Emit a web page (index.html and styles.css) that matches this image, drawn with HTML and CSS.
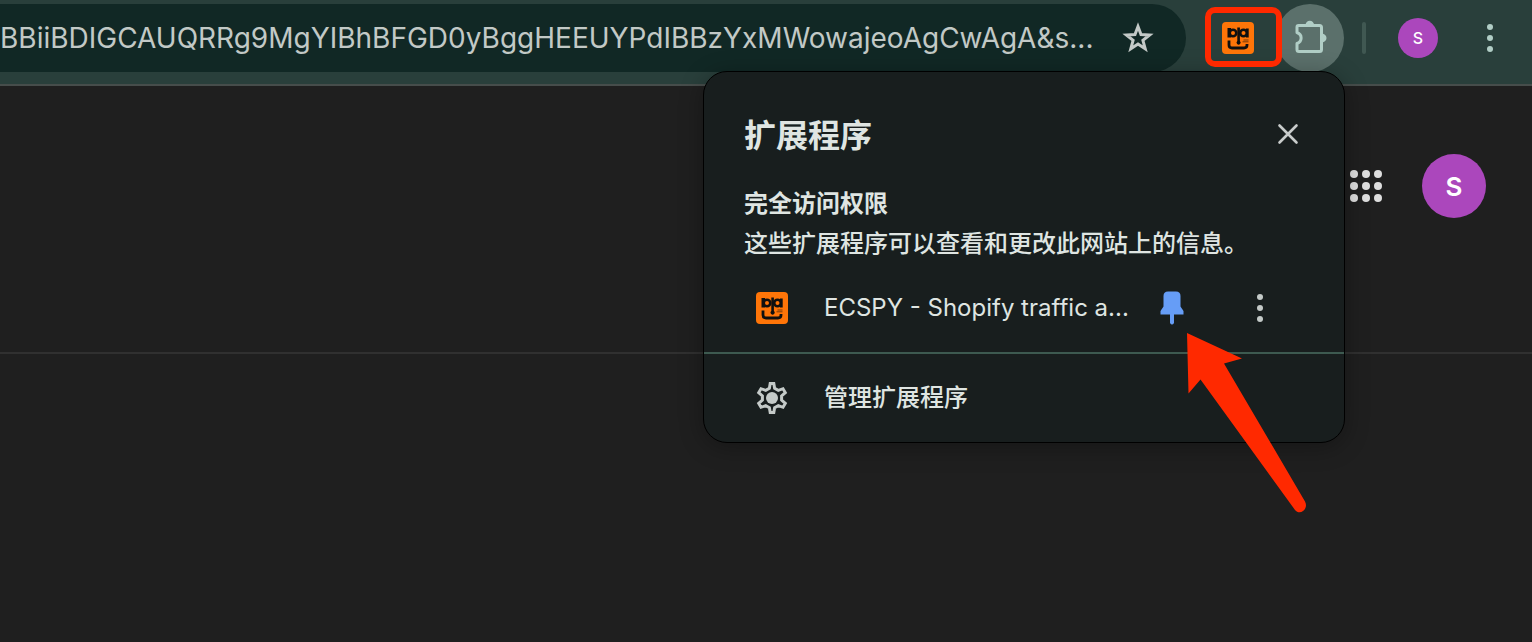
FILE: index.html
```html
<!DOCTYPE html>
<html lang="zh-CN">
<head>
<meta charset="utf-8">
<title>扩展程序</title>
<link rel="stylesheet" href="styles.css">
</head>
<body>
<svg class="defs" aria-hidden="true">
  <symbol id="logo" viewBox="0 0 32 32">
    <rect width="32" height="32" rx="4" fill="#ff7508"/>
    <path fill="#101010" d="M5.500 6h3.500v9.500h-3.500ZM24 6.500h2.700v9h-2.700ZM15.300 5.500h2.600v13.500a2 2 0 1 1-2.600 0Z"/>
    <circle cx="11" cy="11" r="3.300" fill="none" stroke="#101010" stroke-width="2.600"/>
    <circle cx="21.500" cy="11" r="3.300" fill="none" stroke="#101010" stroke-width="2.600"/>
    <path fill="none" stroke="#101010" stroke-width="2.800" d="M7 18.500V23q0 3 3 3h12q3 0 3-3v-1"/>
    <path stroke="#101010" stroke-width="0.700" opacity="0.800" d="M21.500 18h5M20.500 19.800h6"/>
  </symbol>
</svg>
<header class="toolbar">
  <div class="omnibox">
    <input class="url" type="text" readonly aria-label="地址栏" value="BBiiBDIGCAUQRRg9MgYIBhBFGD0yBggHEEUYPdIBBzYxMWowajeoAgCwAgA&amp;s...">
    <button class="icon-button" aria-label="为此标签页添加书签">
      <svg width="32" height="32" viewBox="0 0 32 32"><path fill="none" stroke="#c4cac8" stroke-width="3" d="M16 4.500 19 12.600 27.600 13 20.900 18.400 23.200 26.700 16 22 8.800 26.700 11.100 18.400 4.400 13 13 12.600Z"/></svg>
    </button>
  </div>
  <button class="ext-button" aria-label="ECSPY"><svg width="32" height="32"><use href="#logo"/></svg></button>
  <button class="puzzle-button" aria-label="扩展程序">
    <svg width="40" height="40" viewBox="0 0 40 40"><path fill="none" stroke="#b1cec6" stroke-width="3" stroke-linejoin="round" d="M8.500 7.500H29.500Q31.500 7.500 31.500 9.500V31.500Q31.500 33.500 29.500 33.500H9Q7 33.500 7 31.500V25.500C12.500 23.500 12.500 16.500 7 14.500V9Q7 7.500 8.500 7.500Z"/><path fill="#b1cec6" d="M15.500 7a4.300 4.300 0 0 1 8.600 0ZM32.500 15.500C35 16 36.500 18 36.500 20S35 24 32.500 24.500Z"/></svg>
  </button>
  <span class="separator"></span>
  <button class="avatar avatar-small" aria-label="个人资料">S</button>
  <button class="icon-button menu-button" aria-label="菜单">
    <svg width="32" height="32" viewBox="0 0 32 32" fill="#b1cec6"><circle cx="16" cy="5" r="3"/><circle cx="16" cy="16" r="3"/><circle cx="16" cy="27" r="3"/></svg>
  </button>
</header>
<main class="page">
  <div class="page-header">
    <button class="icon-button" aria-label="应用">
      <svg width="32" height="32" viewBox="0 0 32 32" fill="#dedede"><circle cx="4" cy="4" r="4"/><circle cx="16" cy="4" r="4"/><circle cx="28" cy="4" r="4"/><circle cx="4" cy="16" r="4"/><circle cx="16" cy="16" r="4"/><circle cx="28" cy="16" r="4"/><circle cx="4" cy="28" r="4"/><circle cx="16" cy="28" r="4"/><circle cx="28" cy="28" r="4"/></svg>
    </button>
    <button class="avatar avatar-large" aria-label="账号">S</button>
  </div>
</main>
<section class="popup" aria-labelledby="popup-title">
  <div class="popup-body">
    <div class="popup-head">
      <h1 class="popup-title" id="popup-title">扩展程序</h1>
      <button class="icon-button" aria-label="关闭">
        <svg width="32" height="32" viewBox="0 0 32 32"><path stroke="#c8cccb" stroke-width="2.600" stroke-linecap="round" d="M7.500 5.500 24.500 22.500M24.500 5.500 7.500 22.500"/></svg>
      </button>
    </div>
    <h2 class="access-title">完全访问权限</h2>
    <p class="access-text">这些扩展程序可以查看和更改此网站上的信息。</p>
  </div>
  <div class="row">
    <svg class="row-icon" width="32" height="32"><use href="#logo"/></svg>
    <button class="row-label">ECSPY - Shopify traffic a...</button>
    <button class="icon-button pin-button" aria-label="取消固定">
      <svg width="32" height="36" viewBox="0 0 32 36"><path fill="#669df6" d="M12 1.500H20Q24.500 1.500 24.500 6V16.500L27.500 21V24.500H18V33Q16 36 14 33V24.500H4.500V21L7.500 16.500V6Q7.500 1.500 12 1.500Z"/></svg>
    </button>
    <button class="icon-button" aria-label="更多选项">
      <svg width="32" height="32" viewBox="0 0 32 32" fill="#c4cac8"><circle cx="16" cy="5" r="3"/><circle cx="16" cy="16" r="3"/><circle cx="16" cy="27" r="3"/></svg>
    </button>
  </div>
  <div class="row row-manage">
    <svg class="row-icon" width="32" height="32" viewBox="0 0 32 32"><path fill="none" stroke="#c4cac8" stroke-width="3" stroke-linejoin="miter" d="M14.200 1.500H17.800L18.600 6.200 22.300 8.300 27 6.700 29.300 10.600 25.600 13.900V18.100L29.300 21.400 27 25.300 22.300 23.700 18.600 25.800 17.800 30.500H14.200L13.400 25.800 9.700 23.700 5 25.300 2.700 21.400 6.400 18.100V13.900L2.700 10.600 5 6.700 9.700 8.300 13.400 6.200Z"/><circle cx="16" cy="16" r="6" fill="#c4cac8"/></svg>
    <button class="row-label">管理扩展程序</button>
  </div>
  <svg class="arrow" width="124" height="184" viewBox="0 0 124 184" aria-hidden="true"><path fill="#ff2900" d="M3 3 58 28.500 40 33.500 121 171.500C125 179 116 186 111 180L16.500 49.500 4.500 63.500Z"/></svg>
</section>
</body>
</html>
```
FILE: styles.css
```css
* {
  box-sizing: border-box;
}

body {
  position: relative;
  display: flex;
  flex-direction: column;
  min-height: 100vh;
  margin: 0;
  overflow-x: hidden;
  background: #1f1f1f;
  color: #dfe5e2;
  font-family: Inter, "Noto Sans CJK SC", sans-serif;
  font-size: 24px;
}

button,
input {
  margin: 0;
  padding: 0;
  border: 0;
  background: none;
  color: inherit;
  font: inherit;
}

svg {
  display: block;
}

.defs {
  position: absolute;
  width: 0;
  height: 0;
}

.toolbar {
  display: flex;
  align-items: center;
  padding: 4px 26px 12px 0;
  border-bottom: 2px solid #464d4b;
  background: #293f3b;
}

.omnibox {
  display: flex;
  flex: 1;
  align-items: center;
  gap: 24px;
  height: 68px;
  padding-right: 32px;
  border-radius: 0 34px 34px 0;
  background: #112825;
}

.url {
  flex: 1;
  min-width: 0;
  color: #c2c9c6;
  font-size: 28px;
}

.ext-button {
  position: relative;
  z-index: 1;
  margin: 0 22px 0 36px;
}

.ext-button::after {
  content: "";
  position: absolute;
  inset: -15px -28px -13px -17px;
  border: 6px solid #ff2900;
  border-radius: 10px;
}

.puzzle-button {
  display: grid;
  place-items: center;
  width: 68px;
  height: 68px;
  border-radius: 50%;
  background: #5b706b;
}

.separator {
  width: 4px;
  height: 32px;
  margin: 0 32px 0 18px;
  border-radius: 2px;
  background: #405852;
}

.avatar {
  border-radius: 50%;
  background: #ab47bc;
  color: #fff;
}

.avatar-small {
  width: 40px;
  height: 40px;
  font-size: 16px;
  font-weight: 500;
}

.avatar-large {
  width: 64px;
  height: 64px;
  font-size: 26px;
  font-weight: 600;
}

.menu-button {
  margin-left: 36px;
}

.page {
  flex: 1;
}

.page-header {
  display: flex;
  align-items: flex-start;
  justify-content: flex-end;
  gap: 40px;
  height: 268px;
  padding: 68px 46px 0 0;
  border-bottom: 2px solid #303030;
}

.page-header .icon-button {
  height: 64px;
}

.popup {
  position: absolute;
  top: 71px;
  right: 187px;
  width: 642px;
  border: 1px solid #000;
  border-radius: 24px;
  background: #181e1e;
  box-shadow: 0 4px 24px rgba(0, 0, 0, 0.3);
}

.popup-body {
  padding: 40px 40px 0;
}

.popup-head {
  display: flex;
  align-items: center;
  justify-content: space-between;
  margin-bottom: 24px;
}

.popup-title {
  margin: 0;
  font-size: 32px;
  font-weight: 700;
  line-height: 48px;
}

.access-title,
.access-text {
  margin: 0;
  font-size: 24px;
  line-height: 40px;
}

.access-title {
  font-weight: 700;
}

.access-text,
.row-label {
  font-weight: 500;
}

.row {
  display: flex;
  align-items: center;
  height: 88px;
  padding: 0 68px 0 52px;
}

.row-icon {
  flex: none;
  margin-right: 36px;
}

.row-label {
  flex: 1;
  font-weight: 400;
  line-height: 40px;
  text-align: left;
  white-space: nowrap;
}

.pin-button {
  margin-right: 56px;
}

.row-manage {
  height: 90px;
  border-top: 2px solid #3d5a50;
}

.row-manage .row-label {
  font-weight: 500;
}

.arrow {
  position: absolute;
  top: 258px;
  left: 480px;
}
```
